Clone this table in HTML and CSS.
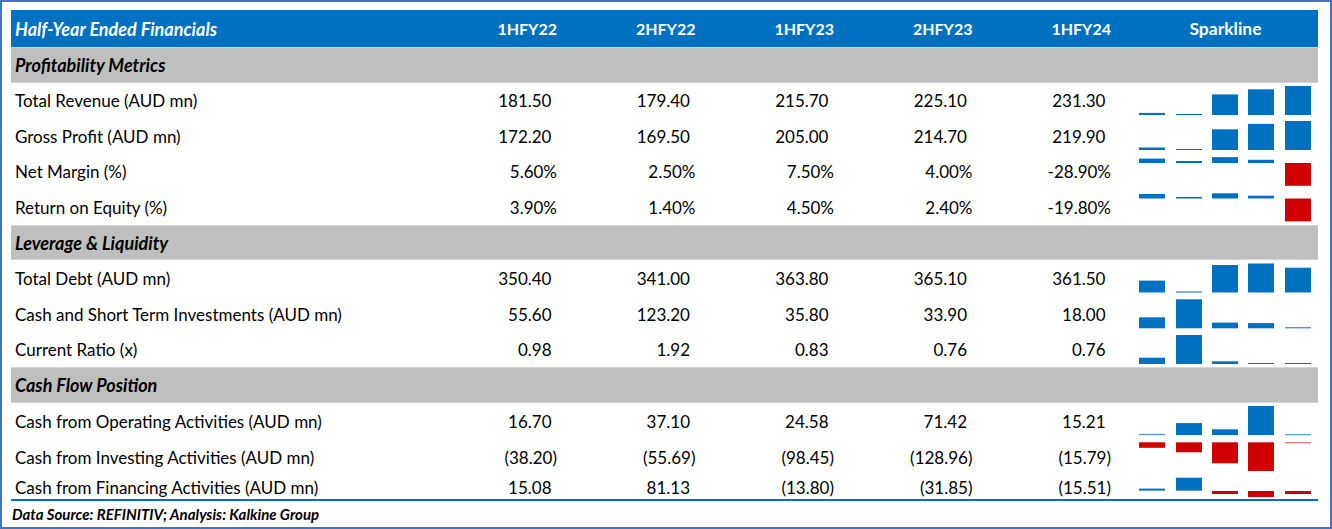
FILE: index.html
```html
<!DOCTYPE html>
<html lang="en">
<head>
<meta charset="utf-8">
<title>Half-Year Ended Financials</title>
<link rel="stylesheet" href="styles.css">
</head>
<body>
<div class="frame">
  <div class="table">
    <div class="row head">
      <div class="lbl title">Half-Year Ended Financials</div>
      <div class="num">1HFY22</div>
      <div class="num">2HFY22</div>
      <div class="num">1HFY23</div>
      <div class="num">2HFY23</div>
      <div class="num">1HFY24</div>
      <div class="spark-h">Sparkline</div>
    </div>

    <div class="row section h36"><div class="lbl">Profitability Metrics</div></div>

    <div class="row h35">
      <div class="lbl">Total Revenue (AUD mn)</div>
      <div class="num p">181.50</div><div class="num p">179.40</div><div class="num p">215.70</div><div class="num p">225.10</div><div class="num p">231.30</div>
      <svg class="spark" width="185" height="35" viewBox="0 0 185 35">
        <rect class="b" x="6" y="29.9" width="26" height="2.1"/><rect class="b" x="43" y="31" width="26" height="1"/><rect class="b" x="79" y="11.4" width="26" height="20.6"/><rect class="b" x="115" y="6.3" width="26" height="25.7"/><rect class="b" x="152" y="3" width="26" height="29"/>
      </svg>
    </div>
    <div class="row h36">
      <div class="lbl">Gross Profit (AUD mn)</div>
      <div class="num p">172.20</div><div class="num p">169.50</div><div class="num p">205.00</div><div class="num p">214.70</div><div class="num p">219.90</div>
      <svg class="spark" width="185" height="36" viewBox="0 0 185 36">
        <rect class="b" x="6" y="29.5" width="26" height="2.5"/><rect class="b" x="43" y="31" width="26" height="1"/><rect class="b" x="79" y="11.3" width="26" height="20.7"/><rect class="b" x="115" y="5.9" width="26" height="26.1"/><rect class="b" x="152" y="3" width="26" height="29"/>
      </svg>
    </div>
    <div class="row h35">
      <div class="lbl">Net Margin (%)</div>
      <div class="num">5.60%</div><div class="num">2.50%</div><div class="num">7.50%</div><div class="num">4.00%</div><div class="num">-28.90%</div>
      <svg class="spark" width="185" height="35" viewBox="0 0 185 35">
        <rect class="b" x="6" y="4.6" width="26" height="4.4"/><rect class="b" x="43" y="7" width="26" height="2"/><rect class="b" x="79" y="3.1" width="26" height="5.9"/><rect class="b" x="115" y="5.8" width="26" height="3.2"/><rect class="r" x="152" y="9" width="26" height="22.8"/>
      </svg>
    </div>
    <div class="row h36">
      <div class="lbl">Return on Equity (%)</div>
      <div class="num">3.90%</div><div class="num">1.40%</div><div class="num">4.50%</div><div class="num">2.40%</div><div class="num">-19.80%</div>
      <svg class="spark" width="185" height="36" viewBox="0 0 185 36">
        <rect class="b" x="6" y="5" width="26" height="4.5"/><rect class="b" x="43" y="7.9" width="26" height="1.6"/><rect class="b" x="79" y="4.3" width="26" height="5.2"/><rect class="b" x="115" y="6.7" width="26" height="2.8"/><rect class="r" x="152" y="9.5" width="26" height="22.8"/>
      </svg>
    </div>

    <div class="row section h35"><div class="lbl">Leverage &amp; Liquidity</div></div>

    <div class="row h36">
      <div class="lbl">Total Debt (AUD mn)</div>
      <div class="num p">350.40</div><div class="num p">341.00</div><div class="num p">363.80</div><div class="num p">365.10</div><div class="num p">361.50</div>
      <svg class="spark" width="185" height="36" viewBox="0 0 185 36">
        <rect class="b" x="6" y="20.6" width="26" height="11.9"/><rect class="b" x="43" y="31.5" width="26" height="1"/><rect class="b" x="79" y="5" width="26" height="27.5"/><rect class="b" x="115" y="3.5" width="26" height="29"/><rect class="b" x="152" y="7.7" width="26" height="24.8"/>
      </svg>
    </div>
    <div class="row h36">
      <div class="lbl">Cash and Short Term Investments (AUD mn)</div>
      <div class="num p">55.60</div><div class="num p">123.20</div><div class="num p">35.80</div><div class="num p">33.90</div><div class="num p">18.00</div>
      <svg class="spark" width="185" height="36" viewBox="0 0 185 36">
        <rect class="b" x="6" y="21.3" width="26" height="11"/><rect class="b" x="43" y="3.3" width="26" height="29"/><rect class="b" x="79" y="26.6" width="26" height="5.7"/><rect class="b" x="115" y="27.1" width="26" height="5.2"/><rect class="b" x="152" y="31.3" width="26" height="1"/>
      </svg>
    </div>
    <div class="row h35">
      <div class="lbl">Current Ratio (x)</div>
      <div class="num p">0.98</div><div class="num p">1.92</div><div class="num p">0.83</div><div class="num p">0.76</div><div class="num p">0.76</div>
      <svg class="spark" width="185" height="35" viewBox="0 0 185 35">
        <rect class="b" x="6" y="25.7" width="26" height="6.3"/><rect class="b" x="43" y="3" width="26" height="29"/><rect class="b" x="79" y="29.3" width="26" height="2.7"/><rect class="b" x="115" y="31" width="26" height="1"/><rect class="b" x="152" y="31" width="26" height="1"/>
      </svg>
    </div>

    <div class="row section h36"><div class="lbl">Cash Flow Position</div></div>

    <div class="row h37">
      <div class="lbl">Cash from Operating Activities (AUD mn)</div>
      <div class="num p">16.70</div><div class="num p">37.10</div><div class="num p">24.58</div><div class="num p">71.42</div><div class="num p">15.21</div>
      <svg class="spark" width="185" height="37" viewBox="0 0 185 37">
        <rect class="bl" x="6" y="30.8" width="26" height="1.4"/><rect class="b" x="43" y="20.1" width="26" height="11.9"/><rect class="b" x="79" y="26.3" width="26" height="5.7"/><rect class="b" x="115" y="3" width="26" height="29"/><rect class="bl" x="152" y="31" width="26" height="1.2"/>
      </svg>
    </div>
    <div class="row h35">
      <div class="lbl">Cash from Investing Activities (AUD mn)</div>
      <div class="num">(38.20)</div><div class="num">(55.69)</div><div class="num">(98.45)</div><div class="num">(128.96)</div><div class="num">(15.79)</div>
      <svg class="spark" width="185" height="35" viewBox="0 0 185 35">
        <rect class="r" x="6" y="2.3" width="26" height="5.5"/><rect class="r" x="43" y="2.3" width="26" height="10"/><rect class="r" x="79" y="2.3" width="26" height="21"/><rect class="r" x="115" y="2.3" width="26" height="28.7"/><rect class="rl" x="152" y="2.3" width="26" height="1"/>
      </svg>
    </div>
    <div class="row h24">
      <div class="lbl">Cash from Financing Activities (AUD mn)</div>
      <div class="num p">15.08</div><div class="num p">81.13</div><div class="num">(13.80)</div><div class="num">(31.85)</div><div class="num">(15.51)</div>
      <svg class="spark" width="185" height="24" viewBox="0 0 185 24">
        <rect class="b" x="6" y="13.6" width="26" height="2"/><rect class="b" x="43" y="2.7" width="26" height="13"/><rect class="r" x="79" y="16" width="26" height="3"/><rect class="r" x="115" y="16" width="26" height="6"/><rect class="r" x="152" y="16" width="26" height="3"/>
      </svg>
    </div>
  </div>
  <div class="source">Data Source: REFINITIV; Analysis: Kalkine Group</div>
</div>
</body>
</html>
```

FILE: styles.css
```css
* { box-sizing: border-box; }

html, body {
  margin: 0;
  padding: 0;
  background: #ffffff;
}

body {
  font-family: Lato, "Liberation Sans", sans-serif;
  color: #000000;
}

.frame {
  width: 1332px;
  height: 529px;
  border: 2px solid #4472c4;
  padding: 8px 12px 0 9px;
  display: flex;
  flex-direction: column;
}

.table {
  display: flex;
  flex-direction: column;
  border-bottom: 2px solid #0070c0;
}

.row {
  display: grid;
  grid-template-columns: 429.5px repeat(5, 138.5px) 185px;
  align-items: center;
  font-size: 17px;
  line-height: 1;
}

.h24 { height: 24px; }
.h35 { height: 35px; }
.h36 { height: 36px; }
.h37 { height: 37px; }

.head {
  height: 37px;
  background: #0070c0;
  color: #ffffff;
  font-weight: 700;
  font-size: 16px;
}

.section {
  background: #bfbfbf;
  font-weight: 700;
  font-style: italic;
  font-size: 18px;
  box-shadow: inset 0 1px 0 #d4d4d4, inset 0 -1px 0 #d4d4d4;
}

.lbl {
  padding-left: 4px;
  white-space: nowrap;
}

.title {
  font-style: italic;
  font-size: 18px;
}

.num {
  text-align: right;
  padding-right: 22px;
  white-space: nowrap;
}

.num.p {
  padding-right: 27.5px;
}

.spark-h {
  text-align: center;
  font-size: 17.5px;
}

.spark {
  display: block;
  align-self: stretch;
}

.spark .b { fill: #0070c0; }
.spark .bl { fill: #5a9ad6; }
.spark .r { fill: #d00000; }
.spark .rl { fill: #e05050; }

.source {
  height: 26px;
  display: flex;
  align-items: center;
  padding-left: 1px;
  font-size: 15px;
  font-weight: 700;
  font-style: italic;
}
```
